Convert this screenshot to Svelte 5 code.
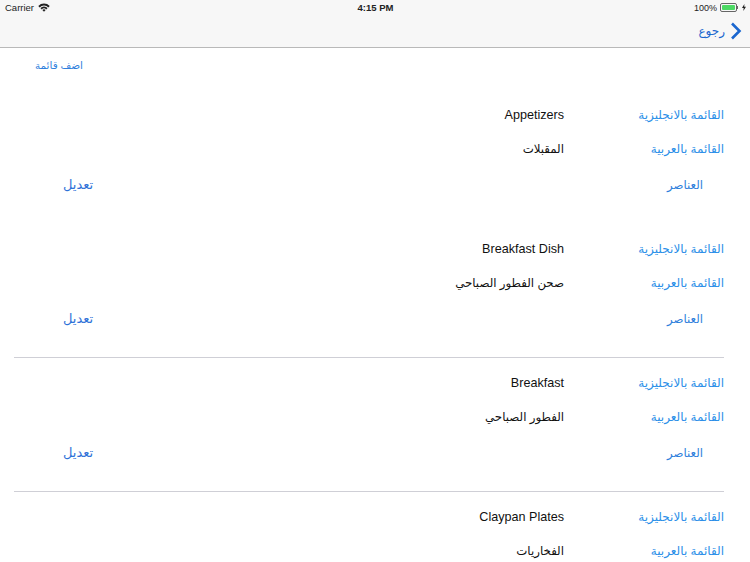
<script>
  const menus = [
    { en: 'Appetizers', ar: 'المقبلات', line: false, items: true },
    { en: 'Breakfast Dish', ar: 'صحن الفطور الصباحي', line: true, items: true },
    { en: 'Breakfast', ar: 'الفطور الصباحي', line: true, items: true },
    { en: 'Claypan Plates', ar: 'الفخاريات', line: false, items: false }
  ];
</script>

<div class="page" dir="rtl">
  <div class="bar">
    <div class="status" dir="ltr">
      <div class="left">
        <span>Carrier</span>
        <svg class="wifi" width="12" height="9" viewBox="0 0 12 9">
          <path d="M0.3 3 A8 8 0 0 1 11.7 3 L10.4 4.4 A6.2 6.2 0 0 0 1.6 4.4 Z" fill="#222"/>
          <path d="M2.4 5.1 A5 5 0 0 1 9.6 5.1 L8.3 6.4 A3.2 3.2 0 0 0 3.7 6.4 Z" fill="#222"/>
          <path d="M4.4 7.1 A2.3 2.3 0 0 1 7.6 7.1 L6 8.8 Z" fill="#222"/>
        </svg>
      </div>
      <span class="time">4:15 PM</span>
      <div class="right">
        <span class="pct">100%</span>
        <span class="battery"><span class="fill"></span></span>
        <span class="nub"></span>
        <svg width="4" height="7" viewBox="0 0 4 7"><path d="M2.4 0 L0 4 H1.7 L1.3 7 L4 2.8 H2.2 Z" fill="#222"/></svg>
      </div>
    </div>
    <div class="nav">
      <svg width="12" height="18" viewBox="0 0 12 18"><path d="M2 1.5 L9.5 9 L2 16.5" fill="none" stroke="#1a66cf" stroke-width="2.6"/></svg>
      <span class="back">رجوع</span>
    </div>
  </div>

  <div class="add"><span>اضف قائمة</span></div>

  {#each menus as m}
    <section class="menu" class:line={m.line}>
      <div class="row"><span class="label">القائمة بالانجليزية</span><span class="value">{m.en}</span></div>
      <div class="row"><span class="label">القائمة بالعربية</span><span class="value ar">{m.ar}</span></div>
      {#if m.items}
        <div class="row items"><span class="label sub">العناصر</span><span class="edit">تعديل</span></div>
      {/if}
    </section>
  {/each}
</div>

<style>
  :global(body) { margin: 0; background: #fff; }
  .page {
    width: 750px; height: 562px; overflow: hidden;
    font-family: "Liberation Sans", "DejaVu Sans", sans-serif;
    font-size: 12px; color: #111;
  }
  .bar { height: 47px; background: #f7f7f7; border-bottom: 1px solid #b9b9b9; }
  .status {
    height: 15px; padding: 0 4px 0 5px; display: grid; grid-template-columns: 1fr auto 1fr;
    align-items: center; font-size: 9.5px; color: #222;
  }
  .left { display: flex; align-items: center; gap: 4px; }
  .time { font-weight: 700; font-size: 9.5px; }
  .right { display: flex; align-items: center; justify-content: flex-end; }
  .pct { font-size: 9px; }
  .battery { width: 13px; height: 5px; border: 1px solid #666; border-radius: 2px; margin-left: 3px; padding: 1px; display: flex; }
  .fill { flex: 1; background: #4cd964; border-radius: 1px; }
  .nub { width: 1px; height: 3px; background: #666; margin: 0 4px 0 0; }
  .nav { height: 32px; display: flex; align-items: center; padding-right: 8px; gap: 5px; }
  .back { color: #1a66cf; font-size: 12px; }
  .add { height: 42px; display: flex; align-items: center; justify-content: flex-end; padding-left: 35px; box-sizing: border-box; color: #2f7fdc; font-size: 10.4px; }
  .add span { margin-top: -8px; }
  .menu { height: 134px; margin: 0 26px 0 14px; padding-top: 8px; box-sizing: border-box; border-bottom: 1px solid transparent; }
  .menu.line { border-bottom-color: #cfcfd6; }
  .row { height: 34px; display: flex; align-items: center; }
  .items { height: 37px; padding-left: 49px; justify-content: space-between; }
  .label { width: 160px; color: #2b8fe8; font-size: 12px; }
  .sub { padding-right: 21px; box-sizing: border-box; color: #2f7fdc; font-size: 11.7px; }
  .value { color: #111; font-size: 12.6px; }
  .value.ar { font-size: 11.8px; }
  .edit { color: #2f72d8; font-size: 13px; }
</style>
